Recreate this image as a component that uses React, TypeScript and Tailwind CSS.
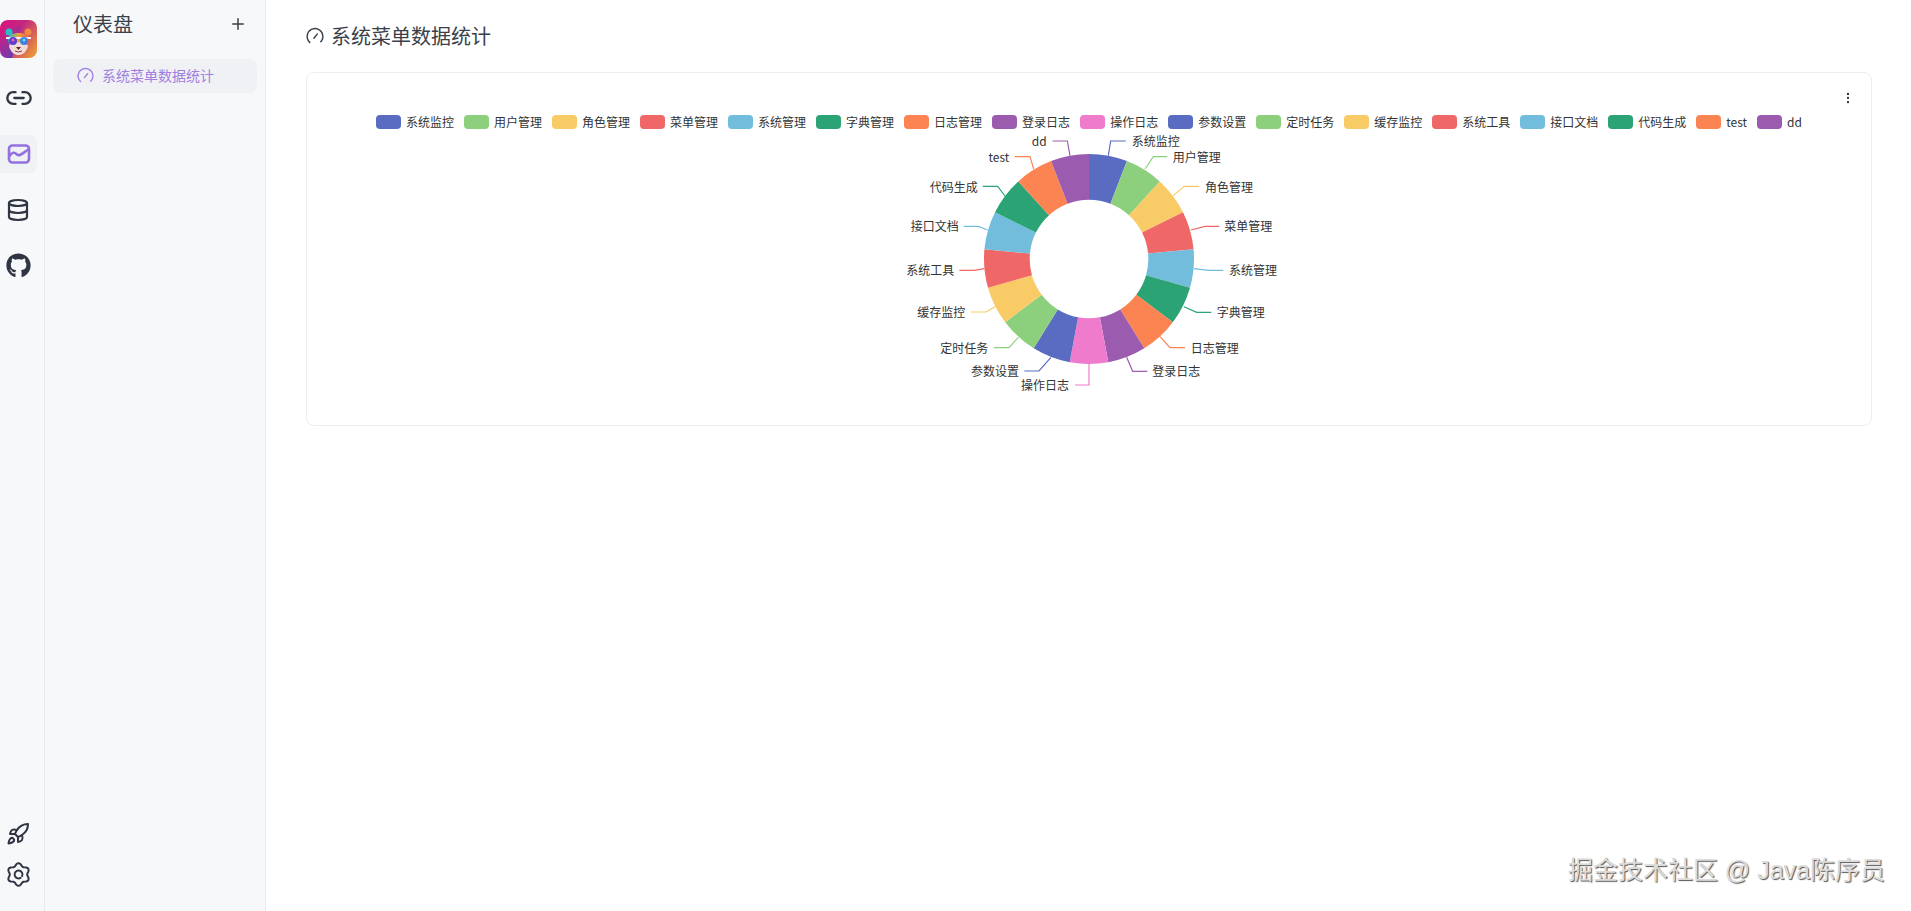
import { Database, Link2, MoreVertical, Plus, Rocket } from "lucide-react";
import { FaGithub } from "react-icons/fa";

const colors = [
  "#5a6bc2",
  "#8ccf7c",
  "#f8cb66",
  "#f06767",
  "#73bddc",
  "#2ba375",
  "#fc8452",
  "#9b5bae",
  "#ee7bcb",
];

// chart coordinates are 3x screen pixels, centre 687,447
const slices = [
  { name: "系统监控", line: "745,137 752,93 797,93", x: 815, y: 98, anchor: "start" },
  { name: "用户管理", line: "855,177 880,140 922,140", x: 938, y: 146, anchor: "start" },
  { name: "角色管理", line: "940,257 972,229 1018,229", x: 1035, y: 236, anchor: "start" },
  { name: "菜单管理", line: "993,360 1035,349 1078,349", x: 1093, y: 352, anchor: "start" },
  { name: "系统管理", line: "1002,476 1045,481 1090,481", x: 1107, y: 485, anchor: "start" },
  { name: "字典管理", line: "972,590 1010,607 1054,607", x: 1070, y: 610, anchor: "start" },
  { name: "日志管理", line: "900,680 930,713 975,713", x: 992, y: 718, anchor: "start" },
  { name: "登录日志", line: "800,742 818,784 862,784", x: 877, y: 788, anchor: "start" },
  { name: "操作日志", line: "687,762 687,825 645,825", x: 627, y: 830, anchor: "end" },
  { name: "参数设置", line: "573,742 537,783 493,783", x: 477, y: 788, anchor: "end" },
  { name: "定时任务", line: "475,682 447,713 402,713", x: 385, y: 718, anchor: "end" },
  { name: "缓存监控", line: "405,590 378,606 333,606", x: 316, y: 610, anchor: "end" },
  { name: "系统工具", line: "373,476 343,481 298,481", x: 283, y: 485, anchor: "end" },
  { name: "接口文档", line: "383,360 355,349 311,349", x: 296, y: 352, anchor: "end" },
  { name: "代码生成", line: "435,258 413,229 368,229", x: 353, y: 236, anchor: "end" },
  { name: "test", line: "521,177 510,140 464,140", x: 448, y: 146, anchor: "end" },
  { name: "dd", line: "630,137 622,93 578,93", x: 560, y: 98, anchor: "end" },
];

function slicePath(i: number) {
  const cx = 687;
  const cy = 447;
  const R = 315;
  const r = 178;
  const step = (Math.PI * 2) / slices.length;
  const a0 = i * step - Math.PI / 2;
  const a1 = (i + 1) * step - Math.PI / 2;
  const p = (rad: number, a: number) =>
    `${(cx + rad * Math.cos(a)).toFixed(1)} ${(cy + rad * Math.sin(a)).toFixed(1)}`;
  return `M${p(R, a0)}A${R} ${R} 0 0 1 ${p(R, a1)}L${p(r, a1)}A${r} ${r} 0 0 0 ${p(r, a0)}Z`;
}

function gearPath() {
  let d = "";
  for (let deg = 0; deg < 360; deg += 6) {
    const a = (deg * Math.PI) / 180;
    const rad = 9.6 - 1.3 * Math.cos(6 * a);
    const cmd = deg === 0 ? "M" : "L";
    d += `${cmd}${(12 + rad * Math.cos(a)).toFixed(2)} ${(12 + rad * Math.sin(a)).toFixed(2)}`;
  }
  return d + "Z";
}

function Logo() {
  return (
    <svg width="37" height="38" viewBox="0 0 37 38" className="block">
      <defs>
        <linearGradient id="logoBg" x1="0" y1="0" x2="1" y2="0.75">
          <stop offset="0" stopColor="#d9127f" />
          <stop offset="0.45" stopColor="#c2277f" />
          <stop offset="1" stopColor="#e8923a" />
        </linearGradient>
        <linearGradient id="logoLow" x1="0" y1="0" x2="0.6" y2="1">
          <stop offset="0.2" stopColor="#7a35b5" stopOpacity="0" />
          <stop offset="1" stopColor="#6236b8" />
        </linearGradient>
        <linearGradient id="logoHead" x1="0" y1="0" x2="1" y2="0">
          <stop offset="0" stopColor="#22c3c8" />
          <stop offset="0.5" stopColor="#e9a13c" />
          <stop offset="1" stopColor="#ef5f4f" />
        </linearGradient>
      </defs>
      <rect width="37" height="38" rx="8" fill="url(#logoBg)" />
      <path d="M0 6 H22 L12 38 H8 Q0 38 0 30 Z" fill="url(#logoLow)" />
      <circle cx="9" cy="12" r="3.500" fill="#22c3c8" />
      <circle cx="28" cy="12" r="3.500" fill="#ef8a3f" />
      <path d="M8 19 C8 11 29 11 29 19 L27 29 C24 34 13 34 10 29 Z" fill="url(#logoHead)" />
      <path d="M9 26 C12 21 25 21 28 26 C26 33 22 35 18.500 35 C15 35 11 33 9 26 Z" fill="#f1dbd6" />
      <rect x="6" y="17" width="25" height="2" fill="#f4eef2" />
      <circle cx="13" cy="21" r="4" fill="#5a3fd0" />
      <circle cx="24" cy="21" r="4" fill="#3f7fe0" />
      <circle cx="13" cy="20" r="1.500" fill="#f05fc0" />
      <circle cx="24" cy="20" r="1.500" fill="#5fe0f0" />
      <path d="M16 27 H21 L18.500 30 Z" fill="#5a2430" />
      <path d="M15 31 Q18.500 33 22 31" stroke="#8a3a40" strokeWidth="1" fill="none" />
    </svg>
  );
}

function ChartIcon() {
  return (
    <svg width="24" height="24" viewBox="0 0 24 24" fill="none" stroke="#9470e0" strokeWidth="2.600" strokeLinecap="round" strokeLinejoin="round">
      <rect x="2" y="3.500" width="20" height="17" rx="3.500" />
      <path d="M2.500 14 C5 10 7.500 10 10 12.500 C12.500 15 15.500 11 21.500 7.500" />
    </svg>
  );
}

function GearIcon() {
  return (
    <svg width="25" height="25" viewBox="0 0 24 24" fill="none" stroke="#2f3542" strokeWidth="1.900" strokeLinecap="round" strokeLinejoin="round">
      <path d={gearPath()} />
      <path d="M15.500 13.500 A3.800 3.800 0 1 0 14 15.200" />
    </svg>
  );
}

function GaugeIcon({ size }: { size: number }) {
  return (
    <svg width={size} height={size} viewBox="0 0 24 24" fill="none" stroke="currentColor" strokeWidth="2" strokeLinecap="round">
      <path d="M5 20.500 A10.500 10.500 0 1 1 19 20.500" strokeDasharray="6 1.200" />
      <path d="M10.500 15 L15 9.500" />
    </svg>
  );
}

function Legend() {
  return (
    <div className="flex justify-center">
      {slices.map((s, i) => (
        <div key={i} className="flex h-[14px] items-center mr-[10px] last:mr-0">
          <span className="mr-[5px] h-[14px] w-[25px] rounded-[4px]" style={{ background: colors[i % colors.length] }} />
          <span className="text-[12px] leading-[14px] text-[#333]">{s.name}</span>
        </div>
      ))}
    </div>
  );
}

function Ring() {
  return (
    <svg width="440" height="279" viewBox="27 63 1320 837" className="mx-auto mt-[2px] block">
      {slices.map((s, i) => (
        <path key={i} d={slicePath(i)} fill={colors[i % colors.length]} />
      ))}
      {slices.map((s, i) => (
        <polyline key={i} points={s.line} fill="none" stroke={colors[i % colors.length]} strokeWidth="3.500" />
      ))}
      {slices.map((s, i) => (
        <text
          key={i}
          x={s.x}
          y={s.y}
          fontSize="36"
          fill="#333"
          textAnchor={s.anchor as "start" | "end"}
          dominantBaseline="middle"
        >
          {s.name}
        </text>
      ))}
    </svg>
  );
}

export default function App() {
  return (
    <div className="relative flex h-screen w-full overflow-hidden bg-white text-[#333] font-['Noto_Sans_CJK_SC','Liberation_Sans',sans-serif]">
      <aside className="flex w-[45px] shrink-0 flex-col border-r border-[#e8eaef] bg-[#f7f8fa] pt-[20px] pb-[23px]">
        <Logo />
        <div className="mt-[21px] flex h-[37px] w-[37px] items-center justify-center text-[#2f3542]">
          <Link2 size={28} strokeWidth={2} />
        </div>
        <div className="mt-[19px] flex h-[38px] w-[37px] items-center justify-center rounded-r-lg bg-[#f0f1f4]">
          <ChartIcon />
        </div>
        <div className="mt-[18px] flex h-[37px] w-[36px] items-center justify-center text-[#2f3542]">
          <Database size={24} strokeWidth={2.200} />
        </div>
        <div className="mt-[19px] flex h-[37px] w-[36px] items-center justify-center text-[#2f3542]">
          <FaGithub size={25} />
        </div>
        <div className="mt-auto flex h-[28px] w-[36px] items-center justify-center text-[#2f3542]">
          <Rocket size={24} strokeWidth={2} />
        </div>
        <div className="mt-[12px] flex h-[28px] w-[36px] items-center justify-center">
          <GearIcon />
        </div>
      </aside>

      <aside className="flex w-[221px] shrink-0 flex-col border-r border-[#e8eaef] bg-[#f7f8fa] px-[8px]">
        <div className="flex h-[48px] items-center justify-between pl-[20px] pr-[10px]">
          <span className="text-[20px] text-[#3a3f4a]">仪表盘</span>
          <Plus size={18} className="text-[#3a3f4a]" />
        </div>
        <div className="mt-[11px] flex h-[34px] items-center gap-[8px] rounded-lg bg-[#f0f1f4] pb-[1px] pl-[24px] text-[14px] text-[#a07fe0]">
          <GaugeIcon size={17} />
          <span>系统菜单数据统计</span>
        </div>
      </aside>

      <main className="min-w-0 flex-1 pl-[40px] pr-[39px]">
        <div className="flex h-[72px] items-center gap-[7px] text-[20px] text-[#3a3f4a]">
          <GaugeIcon size={18} />
          <span>系统菜单数据统计</span>
        </div>
        <section className="relative h-[354px] rounded-lg border border-[#eceef2] pt-[42px]">
          <MoreVertical size={14} className="absolute top-[18px] right-[16px] text-[#333]" />
          <Legend />
          <Ring />
        </section>
      </main>

      <div className="absolute right-[26px] bottom-[24px] text-[25px] leading-[34px] text-[#dcdcdc] [text-shadow:1px_1px_1px_#555] font-['Liberation_Sans','Noto_Sans_CJK_SC',sans-serif]">
        掘金技术社区 @ Java陈序员
      </div>
    </div>
  );
}
